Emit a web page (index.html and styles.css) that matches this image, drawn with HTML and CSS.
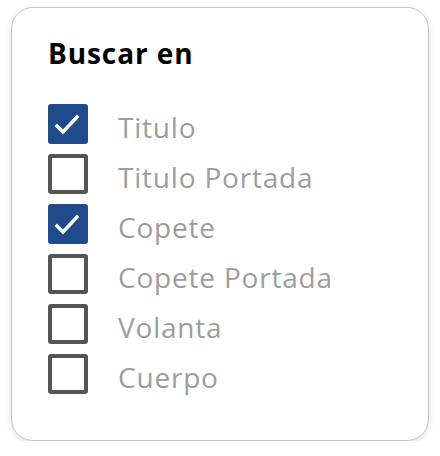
FILE: index.html
```html
<!DOCTYPE html>
<html lang="es">
<head>
<meta charset="utf-8">
<link rel="stylesheet" href="styles.css">
</head>
<body>
<div class="card">
  <h2 class="title">Buscar en</h2>
  <ul class="list">
    <li class="item"><span class="box checked"><svg viewBox="0 0 40 40" width="40" height="40"><polyline points="9,22 15,28 29,13" fill="none" stroke="#fff" stroke-width="3.4" stroke-linecap="square"/></svg></span><span class="label">Titulo</span></li>
    <li class="item"><span class="box"></span><span class="label">Titulo Portada</span></li>
    <li class="item"><span class="box checked"><svg viewBox="0 0 40 40" width="40" height="40"><polyline points="9,22 15,28 29,13" fill="none" stroke="#fff" stroke-width="3.4" stroke-linecap="square"/></svg></span><span class="label">Copete</span></li>
    <li class="item"><span class="box"></span><span class="label">Copete Portada</span></li>
    <li class="item"><span class="box"></span><span class="label">Volanta</span></li>
    <li class="item"><span class="box"></span><span class="label">Cuerpo</span></li>
  </ul>
</div>
</body>
</html>
```

FILE: styles.css
```css
html, body {
  margin: 0;
  padding: 0;
  background: #fff;
}
body {
  padding: 7px 11px 0 11px;
  font-family: "Open Sans", "Liberation Sans", sans-serif;
}
.card {
  box-sizing: border-box;
  width: 418px;
  height: 434px;
  border: 1.5px solid #c4c4c4;
  border-radius: 22px;
  box-shadow: 0 3px 6px rgba(0,0,0,0.12);
  padding: 27px 0 0 36px;
}
.title {
  margin: 0;
  font-size: 28px;
  font-weight: 700;
  letter-spacing: 0.9px;
  line-height: 36px;
  color: #000;
}
.list {
  list-style: none;
  margin: 33px 0 0 0;
  padding: 0;
  display: flex;
  flex-direction: column;
  gap: 10px;
}
.item {
  display: flex;
  align-items: center;
  height: 40px;
}
.box {
  box-sizing: border-box;
  width: 40px;
  height: 40px;
  flex: none;
  border: 4px solid #555;
  border-radius: 3px;
  background: #fff;
}
.box.checked {
  border: none;
  background: #1f4b8c;
}
.box svg {
  display: block;
}
.label {
  margin-left: 30px;
  padding-top: 5px;
  font-size: 28px;
  letter-spacing: 0.8px;
  color: #9d9d9d;
  line-height: 40px;
}
```
